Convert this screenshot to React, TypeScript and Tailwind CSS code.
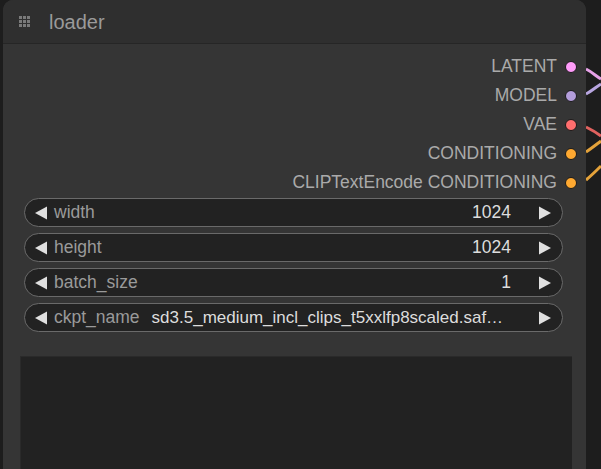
import React from 'react';

const outputs = [
  { name: 'LATENT', color: 'bg-[#ff9cf9]' },
  { name: 'MODEL', color: 'bg-[#b39ddb]' },
  { name: 'VAE', color: 'bg-[#ff6e6e]' },
  { name: 'CONDITIONING', color: 'bg-[#ffa931]' },
  { name: 'CLIPTextEncode CONDITIONING', color: 'bg-[#ffa931]' },
];

const widgets = [
  { label: 'width', value: '1024' },
  { label: 'height', value: '1024' },
  { label: 'batch_size', value: '1' },
  { label: 'ckpt_name', value: 'sd3.5_medium_incl_clips_t5xxlfp8scaled.saf…', combo: true },
];

function Arrow({ dir }: { dir: 'left' | 'right' }) {
  return (
    <svg width="14" height="16" viewBox="0 0 14 16" className="shrink-0">
      {dir === 'left'
        ? <polygon points="13,1.5 13,14.5 1,8" fill="#e0e0e0" />
        : <polygon points="1,1.5 1,14.5 13,8" fill="#e0e0e0" />}
    </svg>
  );
}

function Widget({ label, value, combo }: { label: string, value: string, combo?: boolean }) {
  return (
    <div className="flex h-[29px] items-center rounded-full border border-[#6a6a6a] bg-[#222222] pl-[9px] pr-[10px] text-[17.5px]">
      <Arrow dir="left" />
      <span className="ml-[6px] whitespace-nowrap text-[#9a9a9a]">{label}</span>
      {combo ? (
        <span className="ml-[12px] flex-1 whitespace-nowrap text-[17px] text-[#dddddd]">{value}</span>
      ) : (
        <span className="flex-1 text-right text-[#dddddd]">{value}</span>
      )}
      <span className="ml-[27px] flex items-center">
        <Arrow dir="right" />
      </span>
    </div>
  );
}

export default function App() {
  return (
    <div className="relative h-[469px] w-[601px] overflow-hidden bg-[#1d1d1d] font-['Liberation_Sans',Arial,sans-serif]">
      {/* wires leaving the node */}
      <svg className="absolute left-0 top-0" width="601" height="469">
        <path d="M586 69 C592 72 596 76 601 79" stroke="#e7a2e8" strokeWidth="3" fill="none" />
        <path d="M586 94 C592 91 596 87 601 84" stroke="#b8a6e0" strokeWidth="3" fill="none" />
        <path d="M586 127 C592 130 597 133 601 136" stroke="#e0625f" strokeWidth="3" fill="none" />
        <path d="M586 152 C592 148 597 144 601 141" stroke="#e4a23a" strokeWidth="3" fill="none" />
        <path d="M586 180 C592 175 597 170 601 166" stroke="#e4a23a" strokeWidth="3" fill="none" />
      </svg>

      <div className="relative ml-[3px] flex h-[480px] w-[583px] flex-col rounded-t-[10px] bg-[#353535]">
        {/* title bar */}
        <div className="flex h-[44px] shrink-0 items-center rounded-t-[10px] border-b border-[#262626] bg-[#2f2f2f] pl-[16px]">
          <div className="grid grid-cols-3 gap-[1px]">
            {Array(9).fill(0).map((_, i) => (
              <div key={i} className="h-[3px] w-[3px] bg-[#7a7a7a]" />
            ))}
          </div>
          <span className="ml-[19px] text-[20px] text-[#9a9a9a]">loader</span>
        </div>

        {/* outputs */}
        <div className="flex flex-col items-end pr-[9px] pt-[8px]">
          {outputs.map((o) => (
            <div key={o.name} className="flex h-[29px] items-center">
              <span className="text-[17.5px] text-[#aaaaaa]">{o.name}</span>
              <span className={`ml-[8px] h-[12px] w-[12px] rounded-full border border-[#1a1a1a] ${o.color}`} />
            </div>
          ))}
        </div>

        {/* widgets */}
        <div className="mt-[1px] flex flex-col gap-[6px] pl-[21px] pr-[23px]">
          {widgets.map((w) => (
            <Widget key={w.label} {...w} />
          ))}
        </div>

        {/* preview area */}
        <div className="ml-[17px] mr-[14px] mt-[24px] flex-1 border-l border-t border-[#2a2a2a] bg-[#222222]" />
      </div>
    </div>
  );
}
